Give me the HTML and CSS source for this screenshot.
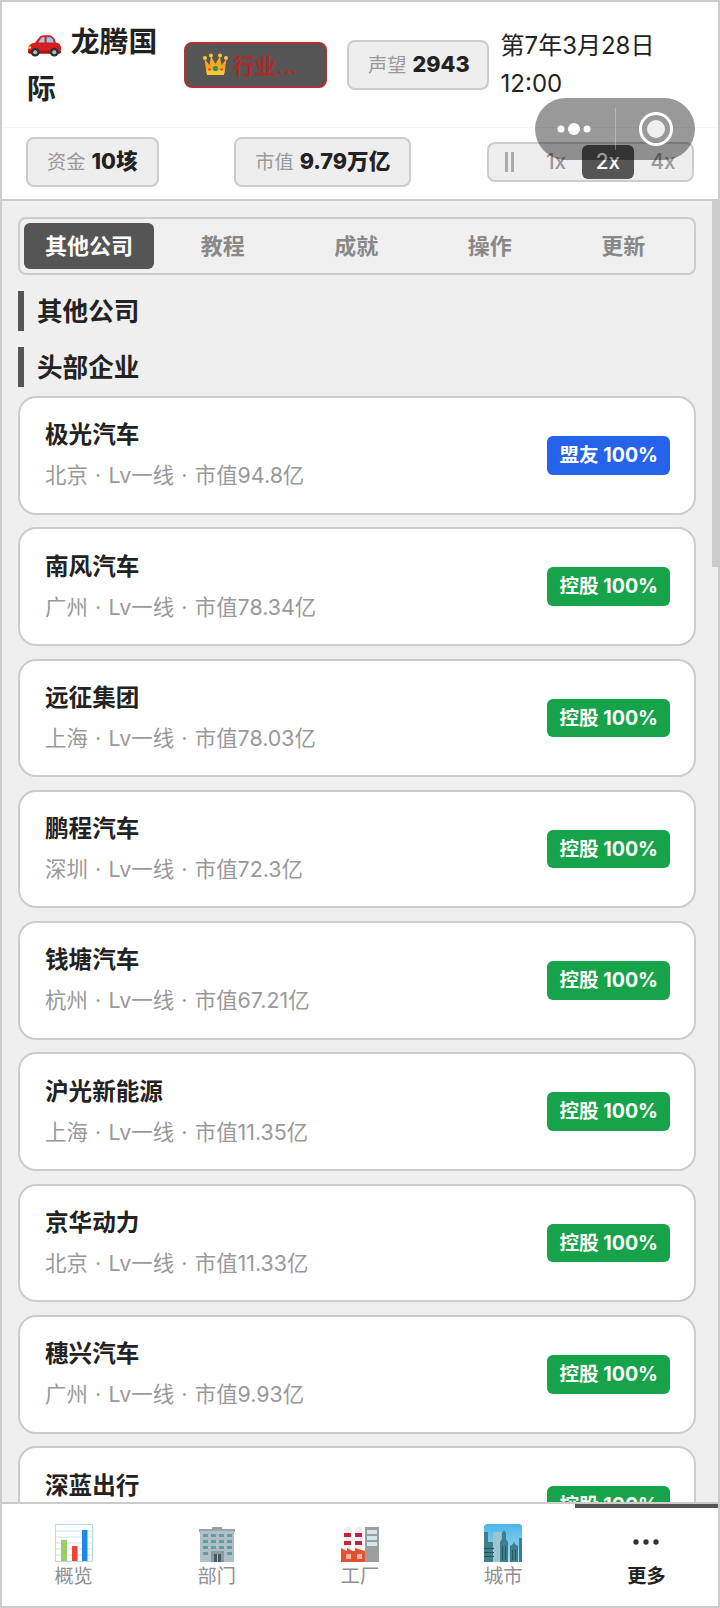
FILE: index.html
```html
<!DOCTYPE html>
<html>
<head>
    <title>龙腾国际</title>
    <link rel="stylesheet" href="styles.css">
</head>
<body>
    <div class="app">
        <header class="header">
            <div class="header-top">
                <div class="company">
                    <svg class="car" viewBox="0 0 34 22"><path fill="#d81e1e" d="M1 15c0-4 2-6 7-7l4-5c1-1.500 3-2 5-2h4c3 0 4 1 6 4l1 3c3 .5 5 2 5 5v2c0 1-1 2-2 2H3c-1 0-2-1-2-2z"/><path fill="#8fd0ee" d="M11 8l3-4.500c.5-.5 1-.5 2-.5h1v5zM19 3h2c2 0 3 .5 4 2l1 3h-7z"/><path fill="#a81212" d="M1 16h32v1.500c0 .5-1 1.500-2 1.500H3c-1 0-2-1-2-1.500z"/><circle cx="8" cy="17.500" r="4.300" fill="#333"/><circle cx="8" cy="17.500" r="2" fill="#bbb"/><circle cx="26.500" cy="17.500" r="4.300" fill="#333"/><circle cx="26.500" cy="17.500" r="2" fill="#bbb"/><rect x="1" y="12" width="3" height="2" fill="#ffd54f"/></svg>
                    龙腾国际
                </div>
                <div class="rank">
                    <svg class="crown" viewBox="0 0 25 23"><path fill="#f5a623" d="M1.500 6l5 6 1.500-9 4.500 8 4.500-8 1.500 9 5-6-2 14H3.500z"/><path fill="#f9c935" d="M3.500 17h18l-.5 5H4z"/><circle cx="2" cy="5" r="2" fill="#f9c935"/><circle cx="8" cy="2.500" r="2" fill="#f9c935"/><circle cx="17" cy="2.500" r="2" fill="#f9c935"/><circle cx="23" cy="5" r="2" fill="#f9c935"/><circle cx="12.500" cy="15.500" r="2.600" fill="#1f9a5a"/><circle cx="6.500" cy="16.500" r="1.300" fill="#d8452e"/><circle cx="18.500" cy="16.500" r="1.300" fill="#d8452e"/></svg>
                    <span>行业...</span>
                </div>
                <div class="stat"><span class="stat-label">声望</span> <b>2943</b></div>
                <div class="date">第7年3月28日 12:00</div>
            </div>
            <div class="header-bottom">
                <div class="stat"><span class="stat-label">资金</span> <b>10垓</b></div>
                <div class="stat"><span class="stat-label">市值</span> <b>9.79万亿</b></div>
                <div class="speed">
                    <div class="speed-btn pause"><span class="pause-bars"></span></div>
                    <div class="speed-btn">1x</div>
                    <div class="speed-btn active">2x</div>
                    <div class="speed-btn last">4x</div>
                </div>
            </div>
        </header>

        <div class="capsule">
            <svg class="capsule-dots" viewBox="0 0 36 14"><circle cx="5" cy="7" r="3.500" fill="#fff"/><circle cx="18" cy="7" r="6" fill="#fff"/><circle cx="31" cy="7" r="3.500" fill="#fff"/></svg>
            <div class="capsule-line"></div>
            <svg class="capsule-ring" viewBox="0 0 36 36"><circle cx="18" cy="18" r="15.500" fill="none" stroke="#fff" stroke-width="3"/><circle cx="18" cy="18" r="9" fill="#fff" fill-opacity=".85"/></svg>
        </div>

        <main class="main">
            <div class="scroll-thumb"></div>
            <div class="tabs">
                <div class="tab active">其他公司</div>
                <div class="tab">教程</div>
                <div class="tab">成就</div>
                <div class="tab">操作</div>
                <div class="tab">更新</div>
            </div>

            <h2 class="section">其他公司</h2>
            <h2 class="section">头部企业</h2>

            <div class="list">
                <div class="card">
                    <div class="info">
                        <div class="name">极光汽车</div>
                        <div class="sub">北京 · Lv一线 · 市值94.8亿</div>
                    </div>
                    <div class="tag ally">盟友 100%</div>
                </div>
                <div class="card">
                    <div class="info">
                        <div class="name">南风汽车</div>
                        <div class="sub">广州 · Lv一线 · 市值78.34亿</div>
                    </div>
                    <div class="tag">控股 100%</div>
                </div>
                <div class="card">
                    <div class="info">
                        <div class="name">远征集团</div>
                        <div class="sub">上海 · Lv一线 · 市值78.03亿</div>
                    </div>
                    <div class="tag">控股 100%</div>
                </div>
                <div class="card">
                    <div class="info">
                        <div class="name">鹏程汽车</div>
                        <div class="sub">深圳 · Lv一线 · 市值72.3亿</div>
                    </div>
                    <div class="tag">控股 100%</div>
                </div>
                <div class="card">
                    <div class="info">
                        <div class="name">钱塘汽车</div>
                        <div class="sub">杭州 · Lv一线 · 市值67.21亿</div>
                    </div>
                    <div class="tag">控股 100%</div>
                </div>
                <div class="card">
                    <div class="info">
                        <div class="name">沪光新能源</div>
                        <div class="sub">上海 · Lv一线 · 市值11.35亿</div>
                    </div>
                    <div class="tag">控股 100%</div>
                </div>
                <div class="card">
                    <div class="info">
                        <div class="name">京华动力</div>
                        <div class="sub">北京 · Lv一线 · 市值11.33亿</div>
                    </div>
                    <div class="tag">控股 100%</div>
                </div>
                <div class="card">
                    <div class="info">
                        <div class="name">穗兴汽车</div>
                        <div class="sub">广州 · Lv一线 · 市值9.93亿</div>
                    </div>
                    <div class="tag">控股 100%</div>
                </div>
                <div class="card">
                    <div class="info">
                        <div class="name">深蓝出行</div>
                    </div>
                    <div class="tag">控股 100%</div>
                </div>
            </div>
        </main>

        <nav class="tabbar">
            <div class="tabbar-item">
                <svg class="tabbar-icon" viewBox="0 0 38 38"><rect x=".5" y=".5" width="37" height="37" fill="#fff" stroke="#b3dcec"/><path stroke="#cfe3ea" d="M1 7h36M1 13h36M1 19h36M1 25h36M1 31h36"/><rect x="6" y="16" width="6" height="21" fill="#9ccc65"/><rect x="17" y="22" width="5.500" height="15" fill="#f44336"/><rect x="27" y="6" width="5.500" height="31" fill="#1e88e5"/></svg>
                <span class="tabbar-label">概览</span>
            </div>
            <div class="tabbar-item">
                <svg class="tabbar-icon" viewBox="0 0 38 38"><rect x="14" y="3" width="10" height="3" fill="#9e9e9e"/><rect x="1" y="5" width="36" height="3" fill="#9aa5aa"/><rect x="2" y="7" width="34" height="31" fill="#b0bec5"/><path fill="#5f9ea5" d="M5 10h5v3H5zM13 10h5v3h-5zM21 10h5v3h-5zM29 10h5v3h-5zM5 16h5v3H5zM13 16h5v3h-5zM21 16h5v3h-5zM29 16h5v3h-5zM5 22h5v3H5zM13 22h5v3h-5zM21 22h5v3h-5zM29 22h5v3h-5zM5 28h5v3H5zM29 28h5v3h-5z"/><rect x="13" y="27" width="13" height="11" fill="#8d9a9f"/><rect x="16" y="30" width="7" height="8" fill="#455a64"/><rect x="19" y="30" width="1" height="8" fill="#b0bec5"/></svg>
                <span class="tabbar-label">部门</span>
            </div>
            <div class="tabbar-item">
                <svg class="tabbar-icon" viewBox="0 0 38 38"><rect x="24" y="3" width="14" height="35" fill="#9e9e9e"/><path fill="#cfe8ee" d="M26 6h10v4H26zM26 12h10v4H26zM26 18h10v4H26z"/><path fill="#eee" d="M3 6c1-3 4-4 7-3v22H3zM14 6c1-3 4-4 7-3v22h-7z"/><path fill="#c2243f" d="M3 9h7v4H3zM3 17h7v4H3zM14 9h7v4h-7zM14 17h7v4h-7z"/><path fill="#e5502e" d="M0 24l6 3v-3l6 3h2v-3l10 3v11H0z"/><path fill="#f2b8a8" d="M5 30h5v5H5zM16 30h5v5h-5z"/></svg>
                <span class="tabbar-label">工厂</span>
            </div>
            <div class="tabbar-item">
                <svg class="tabbar-icon" viewBox="0 0 38 38"><defs><linearGradient id="sky" x1="0" y1="0" x2="0" y2="1"><stop offset="0" stop-color="#4db6e8"/><stop offset="1" stop-color="#a8dcef"/></linearGradient></defs><rect width="38" height="38" rx="3" fill="url(#sky)"/><path fill="#9cc6d2" d="M9 8h8v30H9z"/><path fill="#3f7f8c" d="M0 8h4v10h5v20H0zM16 18l2-3V9l2-3 2 3v6l2 3v20h-8zM26 22l3-2 1-3 1 3 3 2v16h-8zM35 14h3v24h-3z"/><path fill="#26545f" d="M0 24h10v1H0zM0 28h10v1H0zM0 32h10v1H0zM18 22h1v14h-1zM21 22h1v14h-1zM28 26h1v10h-1zM31 26h1v10h-1z"/></svg>
                <span class="tabbar-label">城市</span>
            </div>
            <div class="tabbar-item current">
                <svg class="tabbar-icon" viewBox="0 0 38 38"><circle cx="9" cy="18" r="2.700" fill="#333"/><circle cx="19" cy="18" r="2.700" fill="#333"/><circle cx="29" cy="18" r="2.700" fill="#333"/></svg>
                <span class="tabbar-label">更多</span>
            </div>
        </nav>
    </div>
</body>
</html>
```

FILE: styles.css
```css
* {
    box-sizing: border-box;
}

body {
    font-family: Inter, "Noto Sans CJK SC", sans-serif;
    color: #222;
    background-color: #fff;
    margin: 0;
    padding: 0;
}

.app {
    position: relative;
    display: flex;
    flex-direction: column;
    height: 1608px;
    border: 2px solid #ccc;
    overflow: hidden;
}

/* header */
.header {
    background-color: #fff;
    border-bottom: 2px solid #ccc;
}

.header-top {
    display: flex;
    align-items: center;
    gap: 12px;
    height: 125px;
    padding-left: 25px;
}

.header-top .stat {
    padding-right: 17px;
}

.company {
    width: 137px;
    font-size: 28.8px;
    font-weight: 700;
    line-height: 47px;
}

.car {
    width: 35px;
    height: 23px;
    margin-right: 2px;
    vertical-align: -5px;
}

.rank {
    display: flex;
    align-items: center;
    gap: 5px;
    width: 143px;
    height: 46px;
    margin: 0 8px;
    padding-left: 17px;
    background-color: #555;
    border: 2px solid #b03035;
    border-radius: 8px;
    color: #b52626;
    font-size: 21.6px;
    font-weight: 700;
}

.crown {
    width: 25px;
    height: 23px;
}

.stat {
    padding: 5px 19px;
    background-color: #eee;
    border: 2px solid #ccc;
    border-radius: 8px;
    font-size: 21.6px;
    line-height: 35px;
    white-space: nowrap;
}

.stat b {
    font-weight: 800;
}

.stat-label {
    color: #999;
    font-size: 19.2px;
}

.date {
    width: 160px;
    font-size: 24px;
    line-height: 38px;
}

.header-bottom {
    display: flex;
    align-items: center;
    justify-content: space-between;
    height: 72px;
    padding: 0 24px 3px;
    border-top: 1px solid #f5f5f5;
}

.speed {
    display: flex;
    padding: 1px 0 1px 2px;
    background-color: #eee;
    border: 2px solid #ccc;
    border-radius: 8px;
}

.speed-btn {
    width: 52px;
    height: 34px;
    border-radius: 6px;
    color: #999;
    font-size: 20.8px;
    font-weight: 500;
    line-height: 34px;
    text-align: center;
}

.speed-btn.pause {
    display: flex;
    align-items: center;
    justify-content: center;
    width: 39px;
}

.pause-bars {
    width: 9px;
    height: 20px;
    margin-right: 3px;
    border-left: 3px solid #aaa;
    border-right: 3px solid #aaa;
}

.speed-btn.last {
    width: 58px;
}

.speed-btn.active {
    background-color: #555;
    color: #fff;
}

/* floating menu capsule */
.capsule {
    position: absolute;
    top: 96px;
    left: 533px;
    display: flex;
    align-items: center;
    width: 160px;
    height: 62px;
    background-color: rgba(0, 0, 0, 0.4);
    border-radius: 31px;
}

.capsule-dots {
    width: 36px;
    height: 14px;
    margin-left: 21px;
}

.capsule-line {
    width: 1px;
    height: 42px;
    margin-left: 23px;
    background-color: rgba(255, 255, 255, 0.3);
}

.capsule-ring {
    width: 36px;
    height: 36px;
    margin-left: 22px;
}

/* main */
.main {
    position: relative;
    flex: 1;
    min-height: 0;
    padding: 16px 22px 0 16px;
    background-color: #efefef;
    overflow: hidden;
}

.scroll-thumb {
    position: absolute;
    top: 0;
    right: 0;
    width: 6px;
    height: 366px;
    background-color: #ccc;
}

.tabs {
    display: flex;
    padding: 4px;
    background-color: #f0f0f0;
    border: 2px solid #ccc;
    border-radius: 8px;
}

.tab {
    flex: 1;
    padding: 5px 0;
    border-radius: 6px;
    color: #888;
    font-size: 22px;
    font-weight: 700;
    line-height: 36px;
    text-align: center;
}

.tab.active {
    flex: none;
    width: 130px;
    margin-right: 2px;
    background-color: #555;
    color: #fff;
}

.section {
    height: 40px;
    margin: 16px 0 0;
    padding-left: 13px;
    border-left: 6px solid #555;
    font-size: 25.6px;
    font-weight: 700;
    line-height: 42px;
}

.list {
    display: flex;
    flex-direction: column;
    gap: 12.8px;
    margin-top: 9px;
}

.card {
    display: flex;
    flex: none;
    align-items: center;
    justify-content: space-between;
    height: 118.5px;
    padding: 0 24px 0 25px;
    background-color: #fff;
    border: 2px solid #ccc;
    border-radius: 18px;
}

/* keeps the name at the same height when a card has no second line */
.info {
    min-height: 76px;
    margin-bottom: 2px;
}

.name {
    font-size: 23.6px;
    font-weight: 700;
    line-height: 38px;
}

.sub {
    margin-top: 5px;
    color: #999;
    font-size: 21.4px;
    line-height: 33px;
    word-spacing: 1.3px;
}

.tag {
    padding: 4px 12px;
    background-color: #16a34a;
    border-radius: 6px;
    color: #fff;
    font-size: 19.6px;
    font-weight: 700;
    line-height: 30.5px;
}

.tag.ally {
    background-color: #2563eb;
}

/* bottom bar */
.tabbar {
    position: relative;
    display: flex;
    height: 104px;
    background-color: #fff;
    border-top: 2px solid #ccc;
}

.tabbar-item {
    position: relative;
    display: flex;
    flex: 1;
    flex-direction: column;
    align-items: center;
    padding-top: 20px;
    color: #8f8f8f;
}

.tabbar-item.current {
    color: #222;
    font-weight: 700;
}

.tabbar-item.current::before {
    content: "";
    position: absolute;
    top: 0;
    left: 0;
    right: 0;
    height: 4px;
    background-color: #555;
}

.tabbar-icon {
    width: 38px;
    height: 38px;
}

.tabbar-label {
    font-size: 19.2px;
    line-height: 28px;
}
```
